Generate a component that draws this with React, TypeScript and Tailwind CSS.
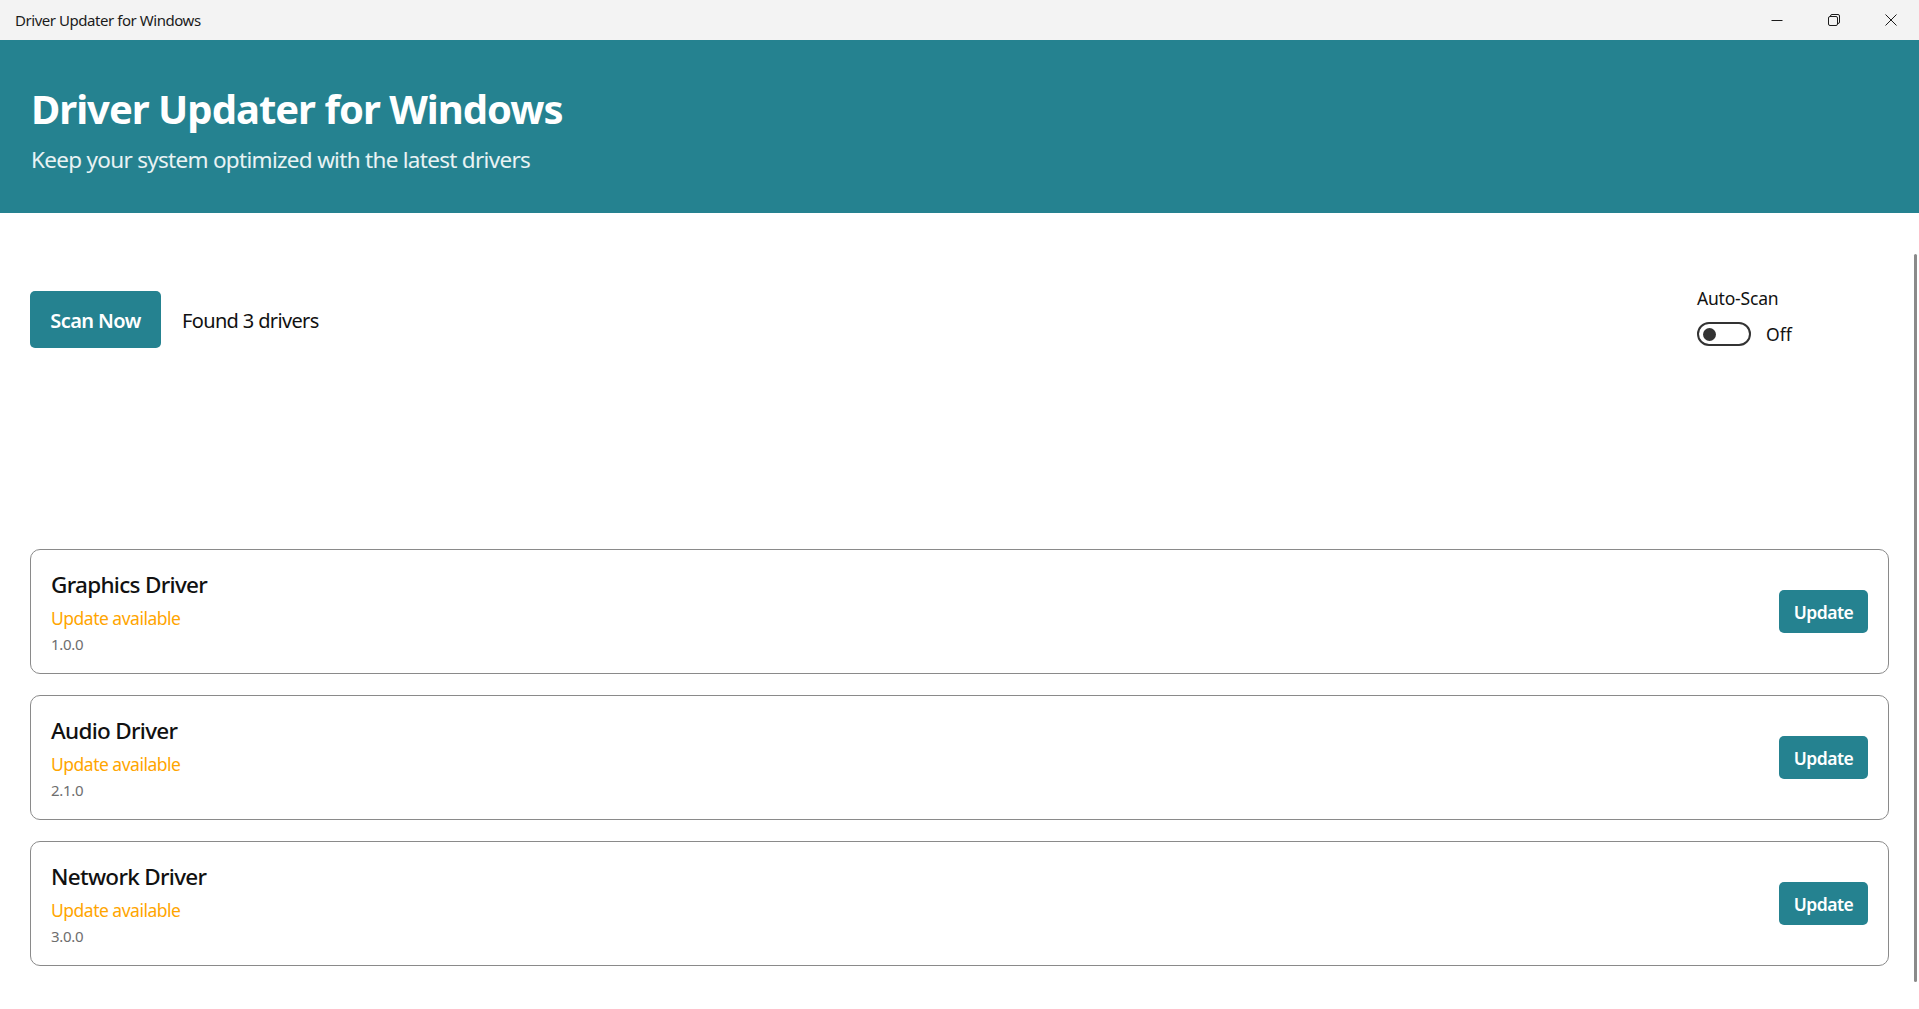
import { useState } from "react"

const drivers = [
  { name: "Graphics Driver", version: "1.0.0" },
  { name: "Audio Driver", version: "2.1.0" },
  { name: "Network Driver", version: "3.0.0" },
]

function CaptionButtons() {
  return (
    <div className="flex h-full">
      <button className="flex h-full w-[57px] items-center justify-center">
        <svg width="12" height="12" viewBox="0 0 12 12" fill="none" stroke="#1b1b1b" strokeWidth="1">
          <path d="M0.5 6.5h11" />
        </svg>
      </button>
      <button className="flex h-full w-[57px] items-center justify-center">
        <svg width="12" height="12" viewBox="0 0 12 12" fill="none" stroke="#1b1b1b" strokeWidth="1">
          <rect x="0.5" y="2.5" width="9" height="9" rx="1.5" />
          <path d="M2.5 2.5V2a1.5 1.5 0 0 1 1.5-1.5h6A1.5 1.5 0 0 1 11.5 2v6A1.5 1.5 0 0 1 10 9.5h-0.5" />
        </svg>
      </button>
      <button className="flex h-full w-[57px] items-center justify-center">
        <svg width="12" height="12" viewBox="0 0 12 12" fill="none" stroke="#1b1b1b" strokeWidth="1">
          <path d="M0.5 0.5l11 11M11.5 0.5l-11 11" />
        </svg>
      </button>
    </div>
  )
}

function DriverCard({ name, version }: { name: string; version: string }) {
  return (
    <div className="flex h-[125px] items-center justify-between rounded-[10px] border border-[#8a8a8a] px-[20px]">
      <div className="flex flex-col self-start pt-[20px]">
        <span className="text-[22.5px] leading-[30px] font-medium tracking-[-0.7px] text-[#111]">{name}</span>
        <span className="mt-[6px] text-[17.5px] leading-[24px] tracking-[-0.5px] text-[#ffa500]">Update available</span>
        <span className="mt-[4px] text-[15px] leading-[20px] tracking-[-0.3px] text-[#6e6e6e]">{version}</span>
      </div>
      <button className="h-[43px] w-[89px] rounded-[5px] bg-[#258290] pt-[2px] text-[17.5px] font-semibold tracking-[-0.5px] text-white">
        Update
      </button>
    </div>
  )
}

export default function App() {
  const [autoScan, setAutoScan] = useState(false)

  return (
    <div className="relative flex h-[1009px] w-[1919px] flex-col overflow-hidden bg-white font-['Noto_Sans',sans-serif]">
      {/* title bar */}
      <div className="flex h-[40px] shrink-0 items-center justify-between bg-[#f3f3f3]">
        <span className="pl-[15px] text-[15px] tracking-[-0.45px] text-[#1b1b1b]">Driver Updater for Windows</span>
        <CaptionButtons />
      </div>

      {/* header */}
      <div className="h-[173px] shrink-0 bg-[#258290] px-[31px] pt-[45px]">
        <h1 className="text-[40px] leading-[48px] font-bold tracking-[-1px] text-white">Driver Updater for Windows</h1>
        <p className="mt-[12px] text-[22.5px] leading-[30px] tracking-[-0.7px] text-white/90">
          Keep your system optimized with the latest drivers
        </p>
      </div>

      <div className="flex flex-col px-[30px]">
        {/* toolbar */}
        <div className="mt-[78px] flex items-start justify-between">
          <div className="flex h-[57px] items-center gap-[21px]">
            <button className="h-[57px] w-[131px] rounded-[5px] bg-[#258290] pt-[2px] text-[20px] font-semibold tracking-[-0.6px] text-white">
              Scan Now
            </button>
            <span className="pt-[2px] text-[20px] tracking-[-0.65px] text-[#111]">Found 3 drivers</span>
          </div>

          <div className="-mt-[5px] flex w-[192px] flex-col">
            <span className="text-[17.5px] leading-[24px] tracking-[-0.2px] text-[#111]">Auto-Scan</span>
            <div className="mt-[12px] flex items-center gap-[15px]">
              <button
                onClick={() => setAutoScan(!autoScan)}
                className="flex h-[24px] w-[54px] items-center rounded-full border-2 border-[#333] px-[4px]"
              >
                <span className="h-[13px] w-[13px] rounded-full bg-[#333]" />
              </button>
              <span className="text-[17.5px] leading-[24px] text-[#111]">{autoScan ? "On" : "Off"}</span>
            </div>
          </div>
        </div>

        {/* driver list */}
        <div className="mt-[201px] flex flex-col gap-[21px]">
          {drivers.map(d => (
            <DriverCard key={d.name} name={d.name} version={d.version} />
          ))}
        </div>
      </div>

      {/* scrollbar */}
      <div className="absolute top-[254px] right-[2px] h-[728px] w-[3px] rounded-full bg-[#8a8a8a]" />
    </div>
  )
}
